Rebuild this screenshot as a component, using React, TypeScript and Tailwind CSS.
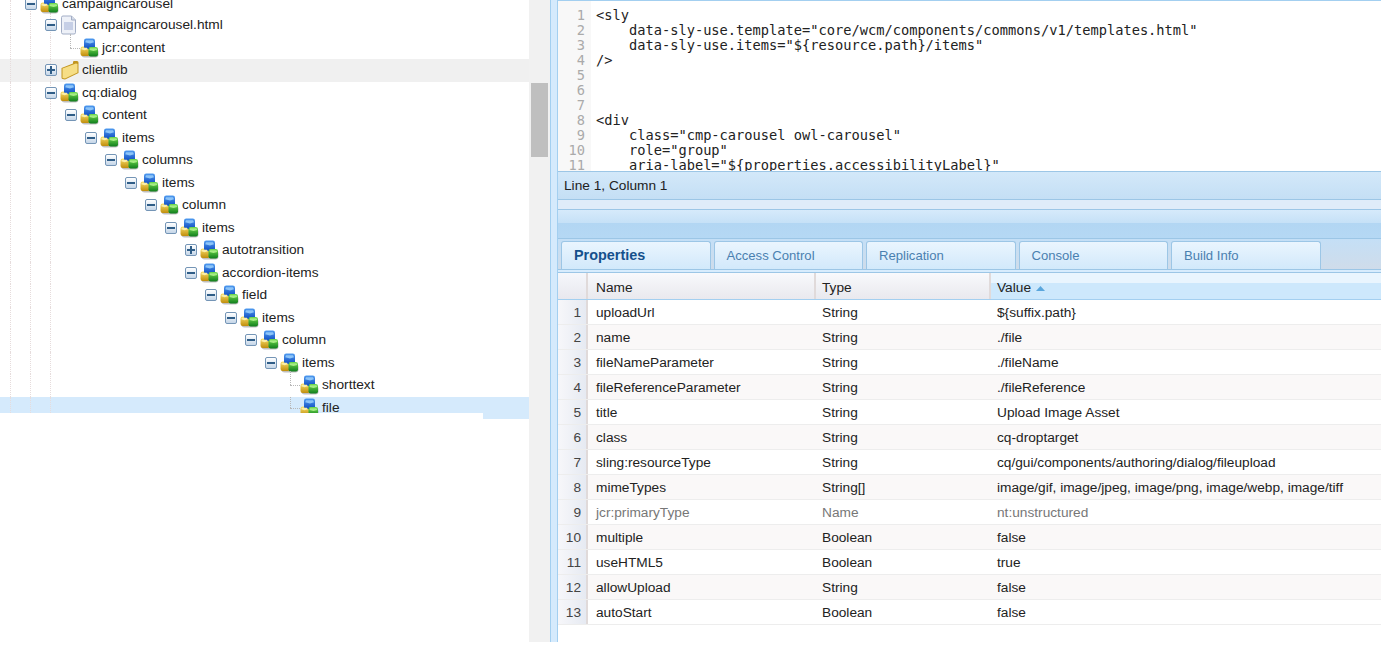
import React from 'react';

const sans = '"Liberation Sans", Arial, sans-serif';

// little stack of three cubes used for every JCR node
const NodeIcon = () => (
  <svg width="19" height="20" viewBox="0 0 19 20" className="shrink-0">
    <defs>
      <linearGradient id="cb" x1="0" y1="0" x2="0" y2="1">
        <stop offset="0" stopColor="#4f9bf0" />
        <stop offset="1" stopColor="#0f4cc0" />
      </linearGradient>
      <linearGradient id="cy" x1="0" y1="0" x2="0" y2="1">
        <stop offset="0" stopColor="#f8de6a" />
        <stop offset="1" stopColor="#c08e0c" />
      </linearGradient>
      <linearGradient id="cg" x1="0" y1="0" x2="0" y2="1">
        <stop offset="0" stopColor="#74dc4e" />
        <stop offset="1" stopColor="#0f7d1d" />
      </linearGradient>
    </defs>
    <rect x="1.500" y="11" width="17" height="8.500" rx="3" fill="#000" opacity=".25" />
    <rect x="0.500" y="8.500" width="9.500" height="9.500" rx="2.200" fill="url(#cy)" />
    <rect x="4" y="0.500" width="11" height="10.500" rx="2.200" fill="url(#cb)" />
    <path d="M6 2.200h7l1 2-4 1.300-4.800-1.300z" fill="#8cc4f8" />
    <rect x="8.500" y="9" width="9.500" height="9.500" rx="2.200" fill="url(#cg)" />
    <path d="M10 10.300h6.500l.8 1.600-3.800 1.200-4-1.200z" fill="#a6ec84" />
    <path d="M1.800 9.800H7l.8 1.500-3.200 1-3.300-1z" fill="#fbeea6" />
  </svg>
);

const FileIcon = () => (
  <svg width="19" height="20" viewBox="0 0 19 20" className="shrink-0">
    <path d="M1.500 2.500q0-1.500 1.500-1.500h8.500l4 4v12.500q0 1.500-1.500 1.500H3q-1.500 0-1.500-1.500z" fill="#eef1f8" stroke="#a3aec6" />
    <path d="M11.500 1v4h4" fill="#d5dbe8" stroke="#a3aec6" />
    <rect x="4" y="7" width="9" height="8" fill="#c6cfe6" />
  </svg>
);

const FolderIcon = () => (
  <svg width="19" height="20" viewBox="0 0 19 20" className="shrink-0">
    <path d="M1.500 8 13 3.500V2q0-1 1.200-1H17q1.500 0 1.500 1.500V13L5 19.500 2.500 19q-1-.3-1-1.500z" fill="#c2951f" />
    <path d="M2.500 8.500 16 3.500l1.500.4V12.500L5 18.500l-2.500-.6z" fill="#f6de86" />
  </svg>
);

const Toggle = ({ open }: { open: boolean }) => (
  <span className="flex h-[12px] w-[12px] shrink-0 items-center justify-center rounded-[2px] border border-[#7495b6] bg-gradient-to-b from-white to-[#c5d6e8]">
    <span className="relative block h-[2px] w-[8px] bg-[#2f5d87]">
      {!open && <span className="absolute left-[3px] top-[-3px] h-[8px] w-[2px] bg-[#2f5d87]" />}
    </span>
  </span>
);

// dotted guides of the outer levels
const Guides = () => (
  <>
    <span className="absolute bottom-0 left-[10px] top-0 border-l border-dotted border-[#e6dcdc]" />
    <span className="absolute bottom-0 left-[30px] top-0 border-l border-dotted border-[#e6dcdc]" />
    <span className="absolute bottom-0 left-[50px] top-0 border-l border-dotted border-[#e6dcdc]" />
  </>
);

type TreeRow = {
  label: string;
  depth: number;
  toggle?: 'open' | 'closed';
  icon?: 'node' | 'file' | 'folder';
  hover?: boolean;
  selected?: boolean;
};

const treeRows: TreeRow[] = [
  { label: 'campaigncarousel.html', depth: 1, toggle: 'open', icon: 'file' },
  { label: 'jcr:content', depth: 2 },
  { label: 'clientlib', depth: 1, toggle: 'closed', icon: 'folder', hover: true },
  { label: 'cq:dialog', depth: 1, toggle: 'open' },
  { label: 'content', depth: 2, toggle: 'open' },
  { label: 'items', depth: 3, toggle: 'open' },
  { label: 'columns', depth: 4, toggle: 'open' },
  { label: 'items', depth: 5, toggle: 'open' },
  { label: 'column', depth: 6, toggle: 'open' },
  { label: 'items', depth: 7, toggle: 'open' },
  { label: 'autotransition', depth: 8, toggle: 'closed' },
  { label: 'accordion-items', depth: 8, toggle: 'open' },
  { label: 'field', depth: 9, toggle: 'open' },
  { label: 'items', depth: 10, toggle: 'open' },
  { label: 'column', depth: 11, toggle: 'open' },
  { label: 'items', depth: 12, toggle: 'open' },
  { label: 'shorttext', depth: 13 },
  { label: 'file', depth: 13, selected: true },
];

const Row = ({ row }: { row: TreeRow }) => {
  const icon =
    row.icon === 'file' ? <FileIcon /> : row.icon === 'folder' ? <FolderIcon /> : <NodeIcon />;
  return (
    <div
      className={`relative flex h-[22.500px] shrink-0 items-center ${
        row.hover
          ? 'bg-[#f0f0f0]'
          : row.selected
            ? 'bg-[linear-gradient(to_bottom,transparent_0.500px,#d5eafc_0.500px)]'
            : ''
      }`}
    >
      <Guides />
      <div className="relative flex items-center" style={{ paddingLeft: 45 + (row.depth - 1) * 20 }}>
        <span className="relative flex h-[22px] w-[15px] items-center">
          {row.toggle ? (
            <Toggle open={row.toggle === 'open'} />
          ) : (
            <>
              <span className="absolute left-[5px] top-[-3px] h-[14px] border-l border-dotted border-[#b8b8b8]" />
              <span className="absolute left-[5px] top-[11px] w-[10px] border-t border-dotted border-[#b8b8b8]" />
            </>
          )}
        </span>
        <span className="flex w-[19px] justify-center">{icon}</span>
        <span className="ml-[3px] text-[13.700px] leading-none text-[#222]">{row.label}</span>
      </div>
    </div>
  );
};

const codeLines = [
  '<sly',
  '    data-sly-use.template="core/wcm/components/commons/v1/templates.html"',
  '    data-sly-use.items="${resource.path}/items"',
  '/>',
  '',
  '',
  '',
  '<div',
  '    class="cmp-carousel owl-carousel"',
  '    role="group"',
  '    aria-label="${properties.accessibilityLabel}"',
];

const tabs = ['Properties', 'Access Control', 'Replication', 'Console', 'Build Info'];

const props = [
  ['uploadUrl', 'String', '${suffix.path}'],
  ['name', 'String', './file'],
  ['fileNameParameter', 'String', './fileName'],
  ['fileReferenceParameter', 'String', './fileReference'],
  ['title', 'String', 'Upload Image Asset'],
  ['class', 'String', 'cq-droptarget'],
  ['sling:resourceType', 'String', 'cq/gui/components/authoring/dialog/fileupload'],
  ['mimeTypes', 'String[]', 'image/gif, image/jpeg, image/png, image/webp, image/tiff'],
  ['jcr:primaryType', 'Name', 'nt:unstructured'],
  ['multiple', 'Boolean', 'false'],
  ['useHTML5', 'Boolean', 'true'],
  ['allowUpload', 'String', 'false'],
  ['autoStart', 'Boolean', 'false'],
];

export default function App() {
  return (
    <div className="flex h-[646px] w-[1390px] overflow-hidden bg-white" style={{ fontFamily: sans }}>
      {/* repository tree */}
      <div className="h-[642px] w-[529px] shrink-0 overflow-hidden">
        <div className="relative flex h-[14px] items-end">
          <Guides />
          <div className="relative mt-[-10px] flex items-center pl-[25px]">
            <span className="w-[15px]">
              <Toggle open />
            </span>
            <span className="flex w-[19px] justify-center">
              <NodeIcon />
            </span>
            <span className="ml-[3px] text-[13.700px] leading-none text-[#222]">campaigncarousel</span>
          </div>
        </div>
        {treeRows.slice(0, -1).map((row, i) => (
          <Row key={i} row={row} />
        ))}
        <div className="h-[16.500px] overflow-hidden">
          <Row row={treeRows[treeRows.length - 1]} />
        </div>
        <div className="ml-[483px] h-[6px] w-[46px] bg-[#d5eafc]" />
      </div>

      {/* splitter */}
      <div className="h-[642px] w-[21px] shrink-0 bg-[#f1f1f1] pl-[2px] pt-[83px]">
        <div className="h-[74px] w-[17px] bg-[#bfbfbf]" />
      </div>

      {/* panel gutter */}
      <div className="h-[642px] w-[8px] shrink-0 border-x border-x-[#a3cff0] bg-[#d5eafc]" />

      {/* right column */}
      <div className="h-[642px] w-[823px] shrink-0 bg-white">
        {/* code editor */}
        <div className="h-[171px] overflow-hidden border-t border-t-[#a3cff0] bg-white">
          <div className="flex font-['DejaVu_Sans_Mono',monospace] text-[13.700px] leading-[15px]">
            <div className="w-[33px] shrink-0 bg-[#f8f8f8] pr-[6px] pt-[7px] text-right text-[#aaa]">
              {codeLines.map((_, i) => (
                <div key={i}>{i + 1}</div>
              ))}
            </div>
            <div className="ml-[5px] whitespace-pre pt-[7px] text-[#222]">
              {codeLines.map((line, i) => (
                <div key={i} className="h-[15px]">{line}</div>
              ))}
            </div>
          </div>
        </div>
        {/* status bar */}
        <div className="flex h-[29px] items-center border-y border-y-[#9cc6e6] bg-gradient-to-b from-[#d3e8f9] to-[#c4dff5] pl-[6px] pt-[2px] text-[13.700px] text-[#222]">
          Line 1, Column 1
        </div>
        <div className="h-[9px] bg-[#dfecf9]" />

        {/* bottom panel header */}
        <div className="h-[30px] border-y border-y-[#9cc6e6] bg-[linear-gradient(to_bottom,#d6eafb_0,#c6e1f7_45%,#b2d6f3_45%,#b5d8f4_100%)]" />

        {/* tab strip */}
        <div className="flex h-[30px] items-end gap-[3px] bg-gradient-to-b from-[#c4dff6] to-[#cfdcea] pl-[3px]">
          {tabs.map((tab, i) => (
            <div
              key={tab}
              className={`flex h-[28px] w-[149.500px] items-center rounded-t-[3px] border border-b-0 border-[#9cc6e6] bg-gradient-to-b from-[#eaf5fe] to-[#d2e9fb] pl-[12px] ${
                i === 0 ? 'text-[14.400px] font-bold text-[#15508c]' : 'text-[13.100px] text-[#4a80b0]'
              }`}
            >
              {tab}
            </div>
          ))}
        </div>
        <div className="h-[3px] border-t border-t-[#9cc6e6] bg-[#d7ecfd]" />

        {/* properties grid */}
        <div className="border-t border-t-[#9cc6e6]">
          <div className="flex h-[26px] text-[13.700px] text-[#222]">
            <div className="w-[30px] shrink-0 border-r-[2px] border-r-[#e0dada] bg-gradient-to-b from-[#f5f7fb] to-[#e8e8ee]" />
            <div className="flex w-[228px] items-center border-r-[2px] border-r-[#e0dada] bg-gradient-to-b from-[#f8f9fc] to-[#e9e9ee] pl-[8px] pt-[4px]">Name</div>
            <div className="flex w-[175px] items-center border-r-[2px] border-r-[#e0dada] bg-gradient-to-b from-[#f8f9fc] to-[#e9e9ee] pl-[6px] pt-[4px]">Type</div>
            <div className="flex flex-1 items-center gap-[5px] bg-[linear-gradient(to_bottom,#e9f5fe_0,#e9f5fe_40%,#cde8fc_40%,#cde8fc_100%)] pl-[6px] pt-[4px]">
              Value
              <svg width="9" height="5" viewBox="0 0 9 5">
                <path d="M0 5 4.500 0 9 5z" fill="#5aa6dc" />
              </svg>
            </div>
          </div>
          <div className="h-[1px] bg-[#a3cff0]" />
          {props.map((p, i) => (
            <div
              key={i}
              className={`flex h-[25px] border-b border-b-[#ededed] text-[13.700px] ${
                i % 2 === 1 ? 'bg-[#faf8f8]' : 'bg-white'
              } ${p[0] === 'jcr:primaryType' ? 'text-[#777]' : 'text-[#222]'}`}
            >
              <div className="flex w-[30px] shrink-0 items-center justify-end border-r-[2px] border-r-[#e0dada] bg-gradient-to-r from-[#f7f7fa] to-[#e6eaf2] pr-[5px] pt-[3px] text-[#444]">
                {i + 1}
              </div>
              <div className="flex w-[228px] items-center pl-[8px] pt-[3px]">{p[0]}</div>
              <div className="flex w-[175px] items-center pl-[6px] pt-[3px]">{p[1]}</div>
              <div className="flex flex-1 items-center pl-[6px] pt-[3px]">{p[2]}</div>
            </div>
          ))}
        </div>
      </div>
    </div>
  );
}
